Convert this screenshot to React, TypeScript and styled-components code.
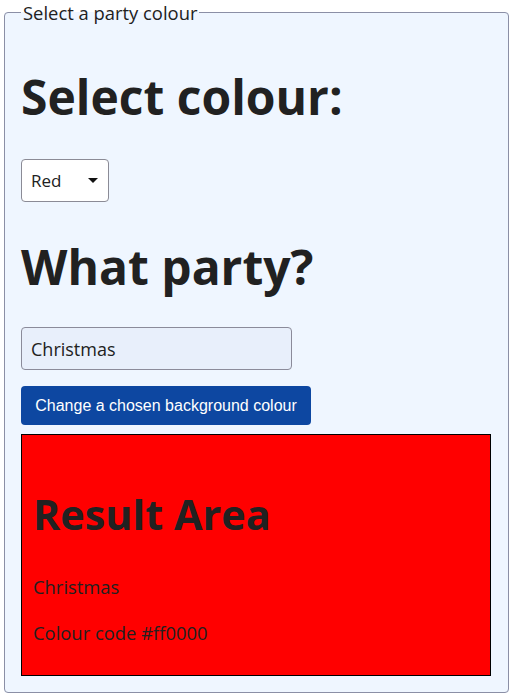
import React, { useState } from "react";
import styled, { createGlobalStyle } from "styled-components";

const GlobalStyle = createGlobalStyle`
  html, body { margin: 0; padding: 0; background: #ffffff; }
  body { font-family: "Open Sans", "Noto Sans", sans-serif; font-size: 18.4px; color: #212121; }
  * { box-sizing: border-box; }
`;

const Page = styled.div`
  padding: 0 5px 0 4px;
`;

const Fieldset = styled.fieldset`
  margin: 0;
  padding: 0 16px 16px 16px;
  border: 1px solid #8b8fa6;
  border-radius: 4px;
  background: #eff6ff;
  display: flex;
  flex-direction: column;
  align-items: flex-start;
  min-width: 0;
`;

const Legend = styled.legend`
  padding: 0 2px;
  font-size: 18.4px;
  line-height: 25px;
  color: #212121;
`;

const Heading = styled.h1<{ $top: number }>`
  margin: ${(p) => p.$top}px 0 0 0;
  font-size: 48px;
  line-height: 1.2;
  font-weight: 700;
  color: #212121;
`;

const SelectWrap = styled.div`
  position: relative;
  margin-top: 33px;
  &::after {
    content: "";
    position: absolute;
    right: 11px;
    top: 19px;
    border-left: 5px solid transparent;
    border-right: 5px solid transparent;
    border-top: 5px solid #111;
    pointer-events: none;
  }
`;

const Select = styled.select`
  appearance: none;
  -webkit-appearance: none;
  width: 88px;
  height: 43px;
  padding: 0 0 0 9px;
  font-family: "Open Sans", sans-serif;
  font-size: 17px;
  color: #212121;
  background: #ffffff;
  border: 1px solid #8b8b96;
  border-radius: 4px;
`;

const Input = styled.input`
  margin-top: 32px;
  width: 271px;
  height: 43px;
  padding: 0 9px;
  font-family: "Open Sans", sans-serif;
  font-size: 18px;
  color: #212121;
  background: #e8effb;
  border: 1px solid #8b8b9a;
  border-radius: 4px;
`;

const Button = styled.button`
  margin-top: 16px;
  width: 290px;
  height: 39px;
  padding: 0;
  font-family: "Liberation Sans", Arial, sans-serif;
  font-size: 16px;
  color: #ffffff;
  background: #0d47a1;
  border: none;
  border-radius: 4px;
`;

const Result = styled.div<{ $bg: string }>`
  margin-top: 9px;
  width: 470px;
  height: 242px;
  background: ${(p) => p.$bg};
  border: 1px solid #000;
  padding: 55px 11px 0 11px;
`;

const ResultTitle = styled.h1`
  margin: 0;
  font-size: 41.4px;
  line-height: 1.2;
  font-weight: 700;
  color: #212121;
`;

const ResultText = styled.p<{ $top: number }>`
  margin: ${(p) => p.$top}px 0 0 0;
  font-size: 18.4px;
  line-height: 27px;
  color: #212121;
`;

const colours: Record<string, string> = {
  Red: "#ff0000",
  Green: "#00ff00",
  Blue: "#0000ff",
};

export default function App() {
  const [colour, setColour] = useState("Red");
  const [party, setParty] = useState("Christmas");
  const code = colours[colour];
  return (
    <Page>
      <GlobalStyle />
      <Fieldset>
        <Legend>Select a party colour</Legend>
        <Heading $top={43}>Select colour:</Heading>
        <SelectWrap>
          <Select value={colour} onChange={(e) => setColour(e.target.value)}>
            {Object.keys(colours).map((c) => (
              <option key={c} value={c}>
                {c}
              </option>
            ))}
          </Select>
        </SelectWrap>
        <Heading $top={36}>What party?</Heading>
        <Input value={party} onChange={(e) => setParty(e.target.value)} />
        <Button>Change a chosen background colour</Button>
        <Result $bg={code}>
          <ResultTitle>Result Area</ResultTitle>
          <ResultText $top={33}>{party}</ResultText>
          <ResultText $top={19}>Colour code {code}</ResultText>
        </Result>
      </Fieldset>
    </Page>
  );
}
